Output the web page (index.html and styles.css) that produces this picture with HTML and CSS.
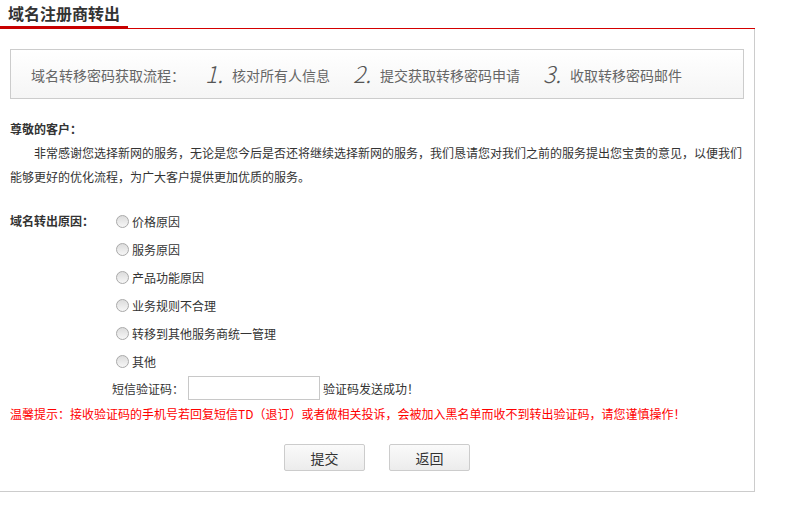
FILE: index.html
```html
<!DOCTYPE html>
<html lang="zh-CN">
<head>
<meta charset="utf-8">
<title>域名注册商转出</title>
<link rel="stylesheet" href="styles.css">
</head>
<body>
<div class="page">
  <div class="header">
    <h1 class="title">域名注册商转出</h1>
  </div>
  <div class="main">
    <div class="process">
      <span class="process-label">域名转移密码获取流程：</span>
      <span class="step"><i class="num">1.</i>核对所有人信息</span>
      <span class="step"><i class="num">2.</i>提交获取转移密码申请</span>
      <span class="step"><i class="num">3.</i>收取转移密码邮件</span>
    </div>
    <p class="greeting">尊敬的客户：</p>
    <p class="intro">非常感谢您选择新网的服务，无论是您今后是否还将继续选择新网的服务，我们恳请您对我们之前的服务提出您宝贵的意见，以便我们能够更好的优化流程，为广大客户提供更加优质的服务。</p>
    <div class="reasons">
      <div class="reasons-label">域名转出原因：</div>
      <div class="options">
        <label class="option"><input type="radio" name="r" class="radio">价格原因</label>
        <label class="option"><input type="radio" name="r" class="radio">服务原因</label>
        <label class="option"><input type="radio" name="r" class="radio">产品功能原因</label>
        <label class="option"><input type="radio" name="r" class="radio">业务规则不合理</label>
        <label class="option"><input type="radio" name="r" class="radio">转移到其他服务商统一管理</label>
        <label class="option"><input type="radio" name="r" class="radio">其他</label>
      </div>
    </div>
    <div class="sms">
      <span class="sms-label">短信验证码：</span>
      <input type="text" class="sms-input">
      <span class="sms-ok">验证码发送成功！</span>
    </div>
    <p class="warning">温馨提示：接收验证码的手机号若回复短信TD（退订）或者做相关投诉，会被加入黑名单而收不到转出验证码，请您谨慎操作！</p>
    <div class="actions">
      <button class="btn">提交</button>
      <button class="btn">返回</button>
    </div>
  </div>
</div>
</body>
</html>
```
FILE: styles.css
```css
* { box-sizing: border-box; }
body {
  margin: 0;
  background: #fff;
  font-family: "Noto Sans CJK SC", "Noto Sans", sans-serif;
  font-size: 12px;
  color: #333;
}
.page { width: 755px; }
.header {
  height: 29px;
  display: flex;
  align-items: flex-end;
  border-bottom: 1px solid #d40000;
}
.title {
  margin: 0 0 -1px 0;
  width: 128px;
  padding-left: 8px;
  height: 29px;
  line-height: 26px;
  font-size: 16px;
  font-weight: bold;
  color: #333;
  border-bottom: 3px solid #c80000;
}
.main {
  border-right: 1px solid #ccc;
  border-bottom: 1px solid #ccc;
  padding: 20px 10px 20px 10px;
}
.process {
  height: 50px;
  border: 1px solid #ccc;
  background: linear-gradient(#fff, #f5f5f5);
  display: flex;
  align-items: center;
  padding: 2px 0 0 20px;
  font-size: 14px;
  color: #666;
}
.process-label { width: 174px; }
.step { display: flex; align-items: center; }
.step + .step { margin-left: 23px; }
.num {
  width: 27px;
  font-size: 23px;
  font-weight: 300;
  font-style: italic;
  color: #555;
  line-height: 24px;
  margin-top: -4px;
}
.greeting {
  margin: 18px 0 0 0;
  line-height: 24px;
  font-weight: bold;
}
.intro {
  margin: 0;
  line-height: 24px;
  text-indent: 24px;
}
.reasons {
  display: flex;
  margin-top: 18px;
}
.reasons-label {
  width: 106px;
  line-height: 28px;
  font-weight: bold;
}
.options { display: flex; flex-direction: column; }
.option {
  display: flex;
  align-items: center;
  height: 28px;
}
.radio {
  appearance: none;
  -webkit-appearance: none;
  width: 13px;
  height: 13px;
  margin: 0 3px 0 0;
  border: 1px solid #a9a9a9;
  border-radius: 50%;
  background: linear-gradient(#dcdcdc, #f6f6f6);
}
.sms {
  display: flex;
  align-items: center;
  height: 24px;
  margin-top: 1px;
  margin-left: 102px;
}
.sms-label { width: 76px; }
.sms-input {
  width: 132px;
  height: 24px;
  border: 1px solid #c8c8c8;
  margin: 0 3px 0 0;
  padding: 0 4px;
  font: inherit;
}
.warning {
  margin: 2px 0 0 0;
  line-height: 24px;
  color: #f00;
}
.actions {
  display: flex;
  justify-content: center;
  gap: 24px;
  margin-top: 18px;
}
.btn {
  width: 81px;
  height: 27px;
  border: 1px solid #ccc;
  border-radius: 2px;
  background: linear-gradient(#fafafa, #ececec);
  font-family: "Noto Sans CJK SC", "Noto Sans", sans-serif;
  font-size: 14px;
  color: #333;
  padding: 0;
}
```
